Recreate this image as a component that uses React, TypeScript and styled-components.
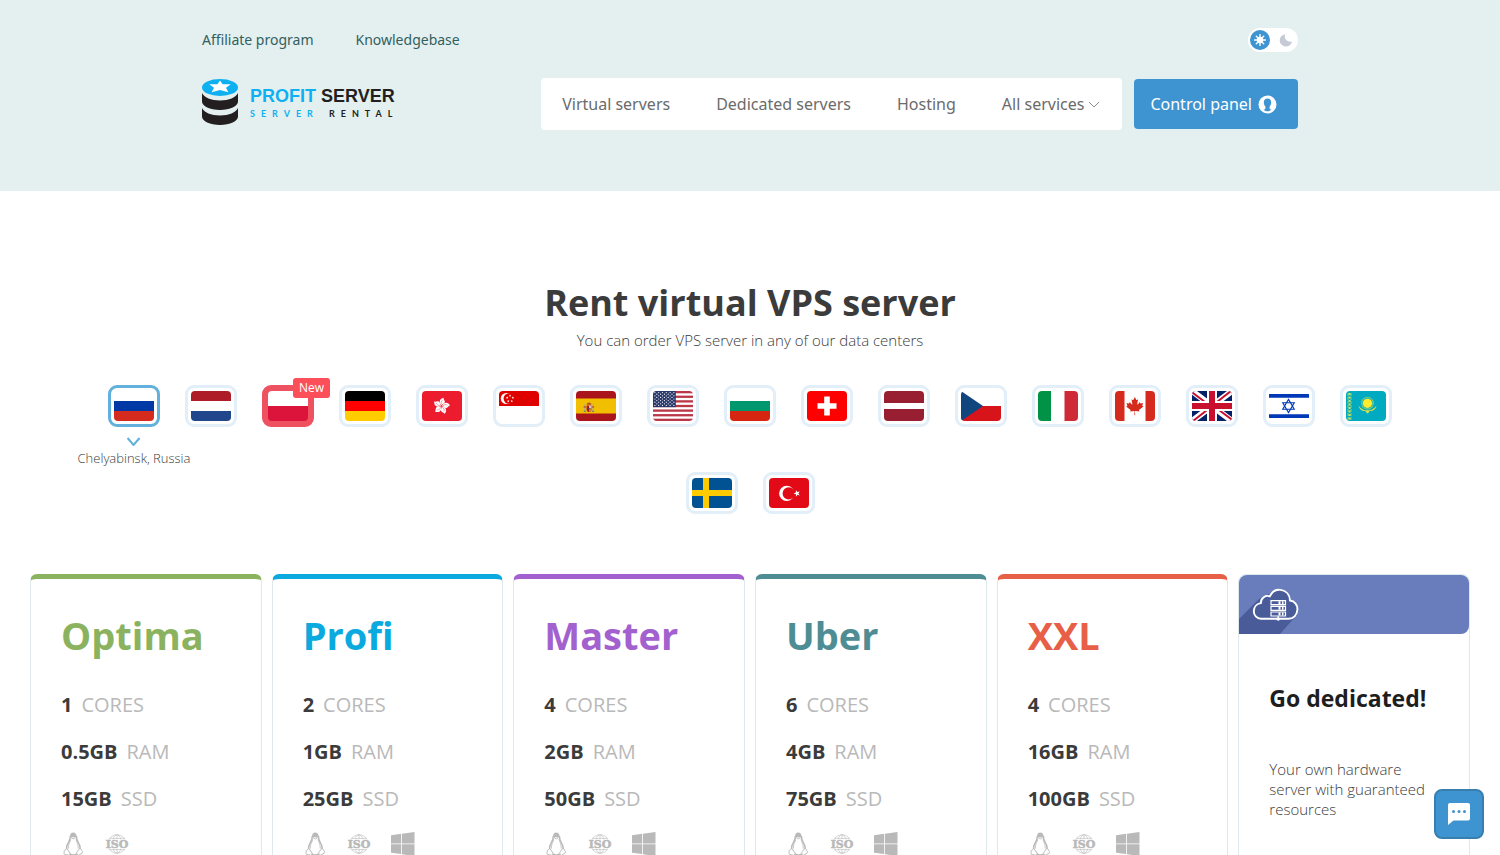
import React, { useState } from "react";
import styled, { createGlobalStyle } from "styled-components";

const GlobalStyle = createGlobalStyle`
  *, *::before, *::after { box-sizing: border-box; }
  body {
    margin: 0;
    background: #fff;
    color: #3b3b3b;
    font-family: "Open Sans", "Noto Sans", sans-serif;
    font-size: 16px;
  }
  h1, h2, p, ul { margin: 0; padding: 0; }
  ul { list-style: none; }
  button { font-family: inherit; cursor: pointer; }
`;

const Header = styled.header`
  background: #e4f0f0;
  padding: 28px 24px 61px;
  font-family: "Noto Sans", "Open Sans", sans-serif;
`;

const HeaderInner = styled.div`
  max-width: 1096px;
  margin: 0 auto;
  display: flex;
  flex-direction: column;
  gap: 26px;
`;

const HeaderRow = styled.div`
  display: flex;
  align-items: center;
  justify-content: space-between;
`;

const TopLinks = styled.nav`
  display: flex;
  gap: 42px;
`;

const TopLink = styled.a`
  color: #33605e;
  font-size: 14px;
  line-height: 24px;
  text-decoration: none;
`;

const ThemeSwitch = styled.label`
  display: flex;
  align-items: center;
  justify-content: space-between;
  width: 50px;
  height: 24px;
  padding: 0 2px;
  border-radius: 12px;
  background: #fff;
  cursor: pointer;
`;

const HiddenCheckbox = styled.input`
  position: absolute;
  opacity: 0;
  width: 1px;
  height: 1px;
  margin: 0;
`;

const SwitchFace = styled.span<{ $active: boolean }>`
  display: flex;
  align-items: center;
  justify-content: center;
  width: 20px;
  height: 20px;
  border-radius: 50%;
  color: ${(p) => (p.$active ? "#fff" : "#c6c9d6")};
  background: ${(p) => (p.$active ? "#3e94d1" : "transparent")};
`;

const LogoLink = styled.a`
  display: flex;
  align-items: center;
  gap: 12px;
  padding-bottom: 4px;
  color: #231f20;
  text-decoration: none;
`;

const LogoWords = styled.span`
  display: flex;
  flex-direction: column;
`;

const LogoName = styled.span`
  display: flex;
  gap: 5px;
  font-family: "Liberation Sans", sans-serif;
  font-weight: 700;
  font-size: 18px;
  line-height: 24px;
`;

const LogoTag = styled.span`
  display: flex;
  gap: 10px;
  font-family: Lato, sans-serif;
  font-weight: 700;
  font-size: 9px;
  line-height: 12px;
  letter-spacing: 6px;
`;

const Blue = styled.span`
  color: #0fb0f2;
`;

const HeaderActions = styled.div`
  display: flex;
  align-items: center;
  gap: 12px;
`;

const MainNav = styled.nav`
  display: flex;
  gap: 46px;
  height: 52px;
  padding: 0 22px 0 21px;
  background: #fff;
  border-radius: 4px;
`;

const NavLink = styled.a`
  color: #6b6b6b;
  font-size: 16px;
  line-height: 52px;
  text-decoration: none;
`;

const NavButton = styled.button`
  display: flex;
  align-items: center;
  gap: 4px;
  padding: 0;
  border: 0;
  background: none;
  color: #6b6b6b;
  font-size: 16px;
`;

const PanelButton = styled.a`
  display: flex;
  align-items: center;
  gap: 6px;
  height: 50px;
  padding: 0 21px 0 16px;
  border-radius: 4px;
  background: #3e94d1;
  color: #fff;
  font-size: 16px;
  text-decoration: none;
`;

const Main = styled.main`
  padding: 87px 30px 0;
`;

const Title = styled.h1`
  font-size: 36px;
  line-height: 50px;
  font-weight: 700;
  text-align: center;
`;

const Subtitle = styled.p`
  font-size: 15px;
  line-height: 24px;
  font-weight: 300;
  text-align: center;
`;

const Locations = styled.ul`
  display: flex;
  flex-wrap: wrap;
  justify-content: center;
  gap: 45px 25px;
  padding: 33px 50px 60px;
`;

const Location = styled.li`
  position: relative;
`;

const borderOf = (selected: boolean, isNew: boolean) =>
  selected ? "#62b1dc" : isNew ? "#ee5261" : "#e2eef8";

const FlagButton = styled.button<{ $selected: boolean; $isNew: boolean }>`
  display: flex;
  align-items: center;
  justify-content: center;
  width: 52px;
  height: 42px;
  padding: 0;
  border: 3px solid ${(p) => borderOf(p.$selected, p.$isNew)};
  border-radius: 9px;
  background: ${(p) => (p.$isNew && !p.$selected ? "#ee5261" : "#fff")};
`;

const FlagSvg = styled.svg`
  display: block;
  width: 40px;
  height: 30px;
  border-radius: 4px;
`;

const NewBadge = styled.span`
  position: absolute;
  top: -7px;
  right: -16px;
  padding: 0 6px;
  border-radius: 3px;
  background: #fc4f5a;
  color: #fff;
  font-size: 12px;
  line-height: 20px;
`;

const LocationName = styled.span`
  position: absolute;
  top: 100%;
  left: 50%;
  display: flex;
  flex-direction: column;
  align-items: center;
  gap: 3px;
  padding-top: 10px;
  transform: translateX(-50%);
  font-size: 13px;
  line-height: 18px;
  font-weight: 300;
  white-space: nowrap;
`;

const Plans = styled.section`
  display: grid;
  grid-template-columns: repeat(6, 1fr);
  gap: 10px;
`;

const PlanCard = styled.article<{ $color: string }>`
  padding: 30px 30px 60px;
  border: 1px solid #dde9ea;
  border-top: 5px solid ${(p) => p.$color};
  border-radius: 7px;
`;

const PlanName = styled.h2<{ $color: string }>`
  color: ${(p) => p.$color};
  font-size: 38px;
  line-height: 52px;
  font-weight: 700;
`;

const Specs = styled.ul`
  display: flex;
  flex-direction: column;
  gap: 20px;
  padding: 30px 0 20px;
`;

const Spec = styled.li`
  display: flex;
  gap: 9px;
  color: #b9b9b9;
  font-size: 20px;
  line-height: 27px;
`;

const SpecValue = styled.strong`
  color: #3b3b3b;
  font-weight: 700;
`;

const Systems = styled.div`
  display: flex;
  gap: 20px;
  color: #b9b9b9;
`;

const DedicatedCard = styled.article`
  border: 1px solid #dde9ea;
  border-radius: 8px;
`;

const DedicatedTop = styled.div`
  height: 59px;
  border-radius: 8px 8px 8px 0;
  background: #697dbd;
  overflow: hidden;
`;

const DedicatedBody = styled.div`
  display: flex;
  flex-direction: column;
  gap: 44px;
  padding: 47px 30px 0;
`;

const DedicatedTitle = styled.h2`
  color: #1e1e1e;
  font-size: 23px;
  line-height: 34px;
  font-weight: 700;
  white-space: nowrap;
`;

const DedicatedText = styled.p`
  font-size: 15px;
  line-height: 20px;
  font-weight: 300;
`;

const ChatButton = styled.button`
  position: fixed;
  right: 16px;
  bottom: 16px;
  display: flex;
  align-items: center;
  justify-content: center;
  width: 50px;
  height: 50px;
  padding: 0;
  border: 2px solid #387faf;
  border-radius: 8px;
  background: #3e94d1;
`;

const starPoints = (cx: number, cy: number, r: number, inner = 0.4, n = 5, turn = -90) =>
  Array.from({ length: n * 2 }, (_, i) => {
    const a = ((turn + (i * 180) / n) * Math.PI) / 180;
    const q = i % 2 ? r * inner : r;
    return `${(cx + q * Math.cos(a)).toFixed(2)},${(cy + q * Math.sin(a)).toFixed(2)}`;
  }).join(" ");

const range = (n: number) => Array.from({ length: n }, (_, i) => i);

const Rows = ({ colors }: { colors: string[] }) => (
  <>
    {colors.map((c, i) => (
      <rect key={i} y={(30 / colors.length) * i} width="40" height={30 / colors.length} fill={c} />
    ))}
  </>
);

const flags: { name: string; isNew?: boolean; art: React.ReactNode }[] = [
  { name: "Chelyabinsk, Russia", art: <Rows colors={["#fff", "#0039a6", "#d52b1e"]} /> },
  { name: "Netherlands", art: <Rows colors={["#ae1c28", "#fff", "#21468b"]} /> },
  { name: "Poland", isNew: true, art: <Rows colors={["#fff", "#dc143c"]} /> },
  { name: "Germany", art: <Rows colors={["#000", "#f00", "#ffcc00"]} /> },
  {
    name: "Hong Kong",
    art: (
      <>
        <rect width="40" height="30" fill="#ec1b2e" />
        {range(5).map((i) => (
          <g key={i} transform={`translate(19.5 15) rotate(${i * 72 + 10})`}>
            <path d="M0-.6C-3.6-2.6-3.6-7 .8-8.6 0-7.4 2.6-6.4 2.6-4.4 2.6-2.6.6-2.4 0-.6z" fill="#fff" />
            <path d="M0-1.6C-1.4-3-1.2-4.6.2-6" fill="none" stroke="#ec1b2e" strokeWidth=".4" />
          </g>
        ))}
      </>
    ),
  },
  {
    name: "Singapore",
    art: (
      <>
        <rect width="40" height="30" fill="#fff" />
        <rect width="40" height="15" fill="#df0000" />
        <circle cx="7.4" cy="7.5" r="5.6" fill="#fff" />
        <circle cx="9.8" cy="7.5" r="5.2" fill="#df0000" />
        {range(5).map((i) => {
          const a = ((i * 72 - 90) * Math.PI) / 180;
          return <polygon key={i} points={starPoints(11 + 3 * Math.cos(a), 7.7 + 3 * Math.sin(a), 1.4)} fill="#fff" />;
        })}
      </>
    ),
  },
  {
    name: "Spain",
    art: (
      <>
        <rect width="40" height="30" fill="#aa151b" />
        <rect y="7.5" width="40" height="15" fill="#f1bf00" />
        <rect x="8.2" y="13.5" width="1.2" height="6.5" fill="#b9a58d" />
        <rect x="16.4" y="13.5" width="1.2" height="6.5" fill="#b9a58d" />
        <path d="M7.6 16h2.4M15.8 16h2.4" stroke="#ad1519" strokeWidth=".8" />
        <path d="M7.8 20.3h2M16 20.3h2" stroke="#005bbf" strokeWidth=".7" />
        <path d="M10.6 14.6h4.8v4c0 1.6-1 2.3-2.4 2.3s-2.4-.7-2.4-2.3z" fill="#ad1519" />
        <path d="M13 14.6h2.4v3H13z" fill="#d8c4cf" />
        <path d="M13 17.6h2.3v1.4c0 1.1-1 1.7-2.3 1.8z" fill="#c98a1b" />
        <circle cx="13" cy="17.6" r=".9" fill="#4a4f9c" />
        <path d="M10.8 13.8c-.6-1.6.8-2.2 2.2-2.4 1.4.2 2.8.8 2.2 2.4z" fill="#b0502a" />
      </>
    ),
  },
  {
    name: "United States",
    art: (
      <>
        <rect width="40" height="30" fill="#fff" />
        {range(7).map((i) => (
          <rect key={i} y={(i * 60) / 13} width="40" height={30 / 13} fill="#b22234" opacity=".9" />
        ))}
        <rect width="22.8" height="16.15" fill="#28386b" />
        {range(9).map((r) =>
          range(r % 2 ? 5 : 6).map((c) => (
            <circle key={`${r}-${c}`} cx={1.9 + c * 3.8 + (r % 2 ? 1.9 : 0)} cy={1.6 + r * 1.6} r=".6" fill="#fff" />
          )),
        )}
      </>
    ),
  },
  { name: "Bulgaria", art: <Rows colors={["#fff", "#00966e", "#d62612"]} /> },
  {
    name: "Switzerland",
    art: (
      <>
        <rect width="40" height="30" fill="#f00" />
        <path d="M17.2 5.5h5.6v6.7h6.7v5.6h-6.7v6.7h-5.6v-6.7h-6.7v-5.6h6.7z" fill="#fff" />
      </>
    ),
  },
  {
    name: "Latvia",
    art: (
      <>
        <rect width="40" height="30" fill="#981e32" />
        <rect y="12" width="40" height="6" fill="#fff" />
      </>
    ),
  },
  {
    name: "Czech Republic",
    art: (
      <>
        <Rows colors={["#fff", "#d7141a"]} />
        <path d="M0 0l22 15L0 30z" fill="#11457e" />
      </>
    ),
  },
  {
    name: "Italy",
    art: (
      <>
        <rect width="40" height="30" fill="#fff" />
        <rect width="13" height="30" fill="#009246" />
        <rect x="26.5" width="13.5" height="30" fill="#ce2b37" />
      </>
    ),
  },
  {
    name: "Canada",
    art: (
      <>
        <rect width="40" height="30" fill="#fff" />
        <path d="M0 0h9.5v30H0zM30.5 0H40v30h-9.5z" fill="#d52b1e" />
        <path
          d="M19.9 6l-1.5 2.8c-.2.3-.5.3-.8.1l-1.1-.6.8 4.4c.2.8-.4.8-.7.5l-1.9-2.2-.3 1.1c0 .2-.2.3-.5.3l-2.4-.5.7 2.3c.1.5.2.7-.2.8l-.9.4 4.2 3.4c.2.1.3.4.2.6l-.4 1.2 4.3-.6.2.3-.2 4h.8l-.2-4 .2-.3 4.3.6-.4-1.2c-.1-.2 0-.5.2-.6l4.2-3.4-.9-.4c-.4-.1-.3-.3-.2-.8l.7-2.3-2.4.5c-.3 0-.5-.1-.5-.3l-.3-1.1-1.9 2.2c-.3.3-.9.3-.7-.5l.8-4.4-1.1.6c-.3.2-.6.2-.8-.1z"
          fill="#d52b1e"
        />
      </>
    ),
  },
  {
    name: "United Kingdom",
    art: (
      <>
        <rect width="40" height="30" fill="#012169" />
        <path d="M0 0l40 30M40 0L0 30" stroke="#fff" strokeWidth="6" />
        <path d="M0 1.3L17 14M23 16l17 12.7M39 0L23 12.5M17 17.5L1 30" stroke="#c8102e" strokeWidth="2" />
        <path d="M20 0v30M0 15h40" stroke="#fff" strokeWidth="10" />
        <path d="M20 0v30M0 15h40" stroke="#c8102e" strokeWidth="6" />
      </>
    ),
  },
  {
    name: "Israel",
    art: (
      <>
        <rect width="40" height="30" fill="#fff" />
        <path d="M0 3h40v3.7H0zM0 23.3h40V27H0z" fill="#0038b8" />
        <path d="M19.5 8.4l5.8 9.9H13.7zM19.5 21.6l5.8-9.9H13.7z" fill="none" stroke="#0038b8" strokeWidth="1.1" />
      </>
    ),
  },
  {
    name: "Kazakhstan",
    art: (
      <>
        <rect width="40" height="30" fill="#00abc2" />
        <path d="M2 2v27M5 2v27" stroke="#c8d84c" strokeWidth=".7" strokeDasharray="3 1" />
        <path d="M3.5 2v27" stroke="#d8e24a" strokeWidth="2" strokeDasharray="2 1.5" />
        <circle cx="21.5" cy="12.3" r="5.7" fill="none" stroke="#ffec2d" strokeWidth="1.3" strokeDasharray=".6 .5" opacity=".8" />
        <circle cx="21.5" cy="12.3" r="4.6" fill="#ffec2d" />
        <path
          d="M12.6 14.5c.3 3.5 3 5.5 6.3 5.5 1 0 1.5 2.4 2.6 2.4s1.6-2.4 2.6-2.4c3.3 0 6-2 6.3-5.5-1.3 2.6-2.9 2.7-4.4 3.9-1.5 1.1-3 .9-4.5.9s-3 .2-4.5-.9c-1.5-1.2-3.1-1.3-4.4-3.9z"
          fill="#d5e04a"
        />
      </>
    ),
  },
  {
    name: "Sweden",
    art: (
      <>
        <rect width="40" height="30" fill="#005293" />
        <path d="M11 0h6v12h23v6H17v12h-6V18H0v-6h11z" fill="#fecb00" />
      </>
    ),
  },
  {
    name: "Turkey",
    art: (
      <>
        <rect width="40" height="30" fill="#e30a17" />
        <circle cx="17.7" cy="15.4" r="7.6" fill="#fff" />
        <circle cx="19.7" cy="15.4" r="6.1" fill="#e30a17" />
        <polygon points={starPoints(28, 15.4, 3.4, 0.4, 5, 180)} fill="#fff" />
      </>
    ),
  },
];

const plans = [
  { name: "Optima", color: "#8bb35f", cores: "1", ram: "0.5GB", ssd: "15GB", windows: false },
  { name: "Profi", color: "#0aa9de", cores: "2", ram: "1GB", ssd: "25GB", windows: true },
  { name: "Master", color: "#a261cf", cores: "4", ram: "2GB", ssd: "50GB", windows: true },
  { name: "Uber", color: "#4f8d94", cores: "6", ram: "4GB", ssd: "75GB", windows: true },
  { name: "XXL", color: "#e85f47", cores: "4", ram: "16GB", ssd: "100GB", windows: true },
];

const LogoMark = () => (
  <svg width="36" height="46" viewBox="0 0 36 46" aria-hidden="true">
    <ellipse cx="18" cy="8.5" rx="18" ry="8.5" fill="#0fb0f2" />
    <path d="M18 1.6l2.6 3.6h8.2l-4.8 3.5 2.3 4.5-8.3-2.2-8.3 2.2L12 8.7 7.2 5.2h8.2z" fill="#fff" />
    <path d="M0 14c2 4.5 9 7.5 18 7.5S34 18.5 36 14v8.5C36 27.2 28 31 18 31S0 27.2 0 22.5z" fill="#231f20" />
    <path d="M0 29c2 4.5 9 7.5 18 7.5S34 33.5 36 29v8.5C36 42.2 28 46 18 46S0 42.2 0 37.5z" fill="#231f20" />
  </svg>
);

const SunIcon = () => (
  <svg width="12" height="12" viewBox="0 0 12 12" aria-hidden="true">
    <circle cx="6" cy="6" r="3.2" fill="currentColor" />
    <path
      d="M6 .6v10.8M.6 6h10.8M2.3 2.3l7.4 7.4M9.7 2.3L2.3 9.7"
      stroke="currentColor"
      strokeWidth="1.4"
      strokeLinecap="round"
    />
  </svg>
);

const MoonIcon = () => (
  <svg width="14" height="14" viewBox="0 0 14 14" aria-hidden="true">
    <path d="M6.2 1.2A6.2 6.2 0 1 0 13 8.4 5.4 5.4 0 0 1 6.2 1.2z" fill="currentColor" />
  </svg>
);

const UserIcon = () => (
  <svg width="19" height="19" viewBox="0 0 19 19" aria-hidden="true">
    <circle cx="9.5" cy="9.5" r="9" fill="#fff" />
    <path
      d="M9.5 3.6c2.3 0 3.7 1.5 3.7 3.9 0 1.7-.7 3-1.6 3.9v1.8c0 1 .9 1.2 1.9 1.6-1 .9-2.4 1.5-4 1.5s-3-.6-4-1.5c1-.4 1.9-.6 1.9-1.6v-1.8c-.9-.9-1.6-2.2-1.6-3.9 0-2.4 1.4-3.9 3.7-3.9z"
      fill="#3e94d1"
    />
  </svg>
);

const LinuxIcon = () => (
  <svg width="24" height="24" viewBox="0 0 24 24" role="img" aria-label="Linux" fill="none" stroke="currentColor">
    <path d="M9 4.5C9 1.8 10.3.4 12.2.4s3.4 1.3 3.4 4c-1.8 1.2-5 1.2-6.6.1z" fill="currentColor" stroke="none" />
    <path d="M9.3 4c.1 3-.6 4.6-1.8 6.4-1.3 2.1-2.2 4-1.9 6.4M15.4 4c0 3 .6 4.600 1.800 6.400 1.300 2.100 2.200 4 1.900 6.400" strokeWidth="1.5" />
    <path d="M9.8 7.2c-.6 3-3 5.6-2.4 9.4M15 7.2c.6 3 2.7 5.6 2.2 9.4" strokeWidth=".8" />
    <path d="M10 5.5l2.400 1.300 2.300-1.300" strokeWidth="1" />
    <path d="M8.600 21.800c2 1.300 5.400 1.300 7.200.1" strokeWidth="1.6" />
    <path d="M5.800 16.400l3.300 4.800c.4 1-.3 2-1.500 2l-4-.7c-1-.3-.4-1.500-.4-2.500s-.3-1.600.6-1.800c1.200-.2 1-1.600 2-1.800zM18.800 16.400l-2.600 3.300c-.6 1-.7 3.300.7 3.600 1.500.2 2.600-1.600 4.300-2.300.9-.5.6-1.200-.1-1.900-.8-.9-.9-2.700-2.300-2.700z" strokeWidth="1" />
  </svg>
);

const IsoText = styled.text`
  font-family: "DejaVu Serif", serif;
  font-weight: 700;
  font-size: 11px;
`;

const IsoIcon = () => (
  <svg width="24" height="24" viewBox="0 0 24 24" role="img" aria-label="ISO image" fill="currentColor">
    <g fill="none" stroke="currentColor" strokeWidth=".6">
      <circle cx="12" cy="12" r="9.3" />
      <ellipse cx="12" cy="12" rx="4.6" ry="9.3" />
      <path d="M12 2.7v18.6M4.6 6.4h14.8M4.6 17.6h14.8" />
    </g>
    <rect y="7.4" width="24" height="9.2" fill="#fff" />
    <IsoText x="12" y="16" textAnchor="middle" stroke="currentColor" strokeWidth=".5">ISO</IsoText>
  </svg>
);

const WindowsIcon = () => (
  <svg width="24" height="24" viewBox="0 0 24 24" role="img" aria-label="Windows" fill="currentColor">
    <path d="M0 3.2L10.2 1.8v9.7H0zM11 1.7L23.5 0v11.5H11zM0 12.3h10.2V22L0 20.7zM11 12.3h12.5V24L11 22.2z" />
  </svg>
);

const CloudIcon = () => (
  <svg width="60" height="60" viewBox="0 0 60 60" aria-hidden="true">
    <path d="M0 44L20 24 38 15 58 40 40 60H0z" fill="#4a5b99" />
    <path
      d="M22 43.7c-4.3 0-7.2-3.5-7.2-7.4 0-4.4 3-7.6 7-8.2 0-5.2 4.8-8.3 9-6.8 2.5-5.3 7-7 10.8-6.4 5.6.8 9.2 4.9 9.4 10.6 4.8.6 7.6 4.5 7.4 9-.3 5.2-3.6 9.2-8.6 9.2z"
      fill="#4a5b99"
      stroke="#fff"
      strokeWidth="1.9"
    />
    <g fill="#4a5b99" stroke="#fff" strokeWidth="1.2">
      <path d="M32 25.6h14.5v4H32zM32 31.3h14.5v4H32zM32 37h14.5v4H32zM39.2 41v4" />
    </g>
    <path d="M39.5 27.6h2M43 27.6h1.5M39.5 33.3h2M43 33.3h1.5M39.5 39h2M43 39h1.5" stroke="#fff" strokeWidth="2.8" />
    <circle cx="39.2" cy="44" r="1.8" fill="#fff" />
  </svg>
);

const ChatIcon = () => (
  <svg width="22" height="22" viewBox="0 0 22 22" aria-hidden="true">
    <path d="M2 0h18a2 2 0 0 1 2 2v13.5a2 2 0 0 1-2 2H5.5L0 22V2a2 2 0 0 1 2-2z" fill="#fff" />
    <circle cx="5.5" cy="8.5" r="1.5" fill="#3e94d1" />
    <circle cx="11" cy="8.5" r="1.5" fill="#3e94d1" />
    <circle cx="16.5" cy="8.5" r="1.5" fill="#3e94d1" />
  </svg>
);

const Chevron = ({ width, height, color, stroke }: { width: number; height: number; color: string; stroke: number }) => (
  <svg width={width} height={height} viewBox={`0 0 ${width} ${height}`} fill="none" aria-hidden="true">
    <path d={`M1 1l${width / 2 - 1} ${height - 2} ${width / 2 - 1}-${height - 2}`} stroke={color} strokeWidth={stroke} />
  </svg>
);

export default function App() {
  const [dark, setDark] = useState(false);
  const [selected, setSelected] = useState(0);

  return (
    <>
      <GlobalStyle />
      <Header>
        <HeaderInner>
          <HeaderRow>
            <TopLinks aria-label="Information">
              <TopLink href="#affiliate">Affiliate program</TopLink>
              <TopLink href="#knowledgebase">Knowledgebase</TopLink>
            </TopLinks>
            <ThemeSwitch>
              <HiddenCheckbox
                type="checkbox"
                aria-label="Dark theme"
                checked={dark}
                onChange={(e) => setDark(e.target.checked)}
              />
              <SwitchFace $active={!dark}><SunIcon /></SwitchFace>
              <SwitchFace $active={dark}><MoonIcon /></SwitchFace>
            </ThemeSwitch>
          </HeaderRow>
          <HeaderRow>
            <LogoLink href="#home">
              <LogoMark />
              <LogoWords>
                <LogoName><Blue>PROFIT</Blue><span>SERVER</span></LogoName>
                <LogoTag><Blue>SERVER</Blue><span>RENTAL</span></LogoTag>
              </LogoWords>
            </LogoLink>
            <HeaderActions>
              <MainNav aria-label="Main">
                <NavLink href="#virtual">Virtual servers</NavLink>
                <NavLink href="#dedicated">Dedicated servers</NavLink>
                <NavLink href="#hosting">Hosting</NavLink>
                <NavButton type="button" aria-haspopup="true">
                  All services
                  <Chevron width={12} height={7} color="#8b8b8b" stroke={1} />
                </NavButton>
              </MainNav>
              <PanelButton href="#panel">
                Control panel
                <UserIcon />
              </PanelButton>
            </HeaderActions>
          </HeaderRow>
        </HeaderInner>
      </Header>

      <Main>
        <Title>Rent virtual VPS server</Title>
        <Subtitle>You can order VPS server in any of our data centers</Subtitle>
        <Locations>
          {flags.map((flag, i) => (
            <Location key={flag.name}>
              <FlagButton
                type="button"
                aria-label={flag.name}
                aria-pressed={i === selected}
                $selected={i === selected}
                $isNew={Boolean(flag.isNew)}
                onClick={() => setSelected(i)}
              >
                <FlagSvg viewBox="0 0 40 30" aria-hidden="true">{flag.art}</FlagSvg>
              </FlagButton>
              {flag.isNew && <NewBadge>New</NewBadge>}
              {i === selected && (
                <LocationName>
                  <Chevron width={14} height={9} color="#62b1dc" stroke={2} />
                  {flag.name}
                </LocationName>
              )}
            </Location>
          ))}
        </Locations>

        <Plans>
          {plans.map((plan) => (
            <PlanCard key={plan.name} $color={plan.color}>
              <PlanName $color={plan.color}>{plan.name}</PlanName>
              <Specs>
                <Spec><SpecValue>{plan.cores}</SpecValue>CORES</Spec>
                <Spec><SpecValue>{plan.ram}</SpecValue>RAM</Spec>
                <Spec><SpecValue>{plan.ssd}</SpecValue>SSD</Spec>
              </Specs>
              <Systems>
                <LinuxIcon />
                <IsoIcon />
                {plan.windows && <WindowsIcon />}
              </Systems>
            </PlanCard>
          ))}
          <DedicatedCard>
            <DedicatedTop><CloudIcon /></DedicatedTop>
            <DedicatedBody>
              <DedicatedTitle>Go dedicated!</DedicatedTitle>
              <DedicatedText>Your own hardware server with guaranteed resources</DedicatedText>
            </DedicatedBody>
          </DedicatedCard>
        </Plans>
      </Main>

      <ChatButton type="button" aria-label="Open chat"><ChatIcon /></ChatButton>
    </>
  );
}
